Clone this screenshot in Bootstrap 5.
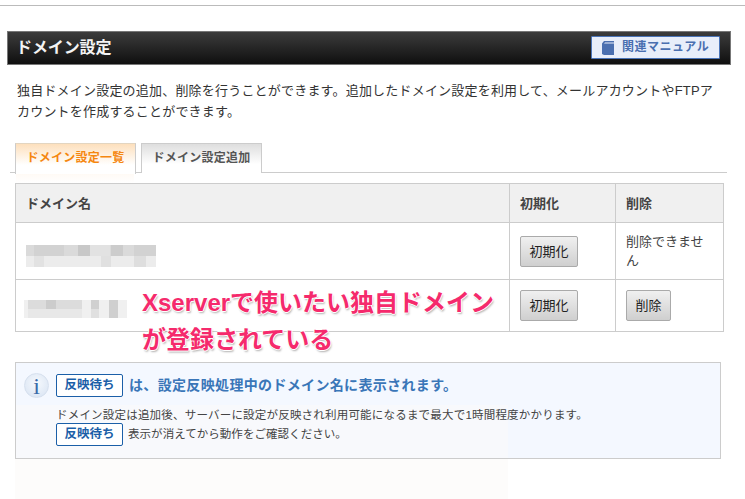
<!DOCTYPE html>
<html lang="ja"><head><meta charset="utf-8"><title>ドメイン設定</title>
<link href="https://cdn.jsdelivr.net/npm/bootstrap@5.3.0/dist/css/bootstrap.min.css" rel="stylesheet">
<style>
html,body{height:499px;overflow:hidden}
body{background:#fff;color:#333;font:13px/21px "Liberation Sans","Noto Sans CJK JP",sans-serif;position:relative}
.top-rule{height:6px;border-bottom:1px solid #bbb}
.wrap{padding:25px 14px 0 7px}
.title-bar{height:34px;border:1px solid #777;background:linear-gradient(#3c3c3c,#0f0f0f);padding:0 10px 0 8px}
.title-bar h1{margin:0;font-size:16px;font-weight:700;color:#f4f4f4;letter-spacing:-.1px;line-height:32px}
.manual{width:129px;height:23px;background:#e8eefa;border:1px solid #4a74b8;border-radius:1px;color:#4a6fb0;font-size:12px;font-weight:700;letter-spacing:.5px;line-height:21px;text-decoration:none;margin-top:-1px;padding-left:10px}
.manual:hover{color:#4a6fb0}
.intro{margin:15px 0 0 10px;letter-spacing:.2px;color:#333;width:705px;font-size:13px}
.tabs-row{margin:21px 4px 0 3px;padding-left:5px;border-bottom:1px solid #ccc;height:30px;gap:5px;flex-wrap:nowrap}
.tabs-row .nav-link{width:121px;height:30px;padding:0;margin:0;border:1px solid #ccc;border-bottom:0;border-radius:0;font-size:12px;font-weight:700;line-height:28px;text-align:center;color:#555;background:linear-gradient(#dedede,#fff 70%);letter-spacing:.25px}
.tabs-row .nav-link.active{color:#f5870f;background:linear-gradient(#fde0bd,#fff 70%);border-color:#e3d5c0 #ccc #fff;height:31px}
.zone{margin:0 0 0 8px;width:708px}
.tab-trace{height:10px;width:118px;margin-left:1px;background:linear-gradient(#fffaf4,#fff)}
.dom-table{margin:0;border-color:#ccc;table-layout:fixed;width:708px;--bs-table-color:#444}
.dom-table th{background:#f0f0f0;font-size:13px;font-weight:700;color:#444;height:39px;padding:0 10px;vertical-align:middle;border-color:#ccc}
.dom-table td{padding:0 10px;vertical-align:middle;border-color:#ccc;font-size:13px;line-height:19px}
.row-a{height:57px}.row-b{height:52px}
.grey-btn{height:31px;padding:0;border:1px solid #aaa;border-radius:2px;background:linear-gradient(#f0f0f0,#cfcfcf);font-size:13px;color:#222;line-height:29px}
.grey-btn.w1{width:58px}.grey-btn.w2{width:45px}
.mosaic{display:block;filter:blur(.6px)}
.m1{margin-top:9px}
.m2{margin:6px 0 0 -2px}
.info-box{margin:30px 0 0;width:706px;height:97px;border:1px solid #ccc;background:linear-gradient(transparent 44%,#f8f9fc 44%) no-repeat 0 0/492px 100%,#f4f8ff;padding:9px 8px;gap:7px}
.info-mark{width:25px;height:25px;flex:none;border-radius:50%;border:1px solid #d6e0ee;background:radial-gradient(circle at 50% 40%,#f6f9fd,#d6e2f2);color:#3a6aa8;font:400 24px/24px "Liberation Serif",serif;text-align:center;margin-top:1px}
.wait-tag{display:inline-block;width:67px;height:23px;border:1px solid #1b5fa8;border-radius:2px;background:#fff;color:#1b5fa8;font-size:12.5px;font-weight:700;line-height:21px;text-align:center;letter-spacing:-.05px}
.info-head{color:#3a76b8;font-size:14px;font-weight:700;line-height:23px;margin:2px 0 0;letter-spacing:.34px}
.info-head .wait-tag{margin-right:6px;vertical-align:top}
.info-text{font-size:11.5px;line-height:21px;color:#444;margin:8px 0 0;letter-spacing:.05px}
.info-text .first-line{letter-spacing:.2px}
.info-text .second-line{margin-top:-3px;line-height:23px}
.info-text .wait-tag{margin-right:5px;vertical-align:top}
.fade-foot{width:493px;height:41px;background:#fdfcfb}
.callout{position:absolute;left:142px;top:284px;margin:0;width:360px;font-size:24px;font-weight:700;line-height:37px;color:#f52a6c;text-shadow:-1px 0 #fff,1px 0 #fff,0 -1px #fff,0 1px #fff,1px 2px 2px rgba(0,0,0,.3)}
</style></head><body>
<div class="top-rule"></div>
<main class="wrap">
  <div class="title-bar d-flex justify-content-between align-items-center">
    <h1>ドメイン設定</h1>
    <a class="manual d-flex align-items-center gap-2" href="#">
      <svg width="12" height="14" viewBox="0 0 12 14"><path fill="#4a6fb0" d="M0 2.5 2 0h10v1.5H3L2 2.5h10V14H2l-2-1z"/></svg>
      <span>関連マニュアル</span>
    </a>
  </div>
  <p class="intro">独自ドメイン設定の追加、削除を行うことができます。追加したドメイン設定を利用して、メールアカウントやFTPアカウントを作成することができます。</p>
  <ul class="nav tabs-row">
    <li class="nav-item"><a class="nav-link active" href="#">ドメイン設定一覧</a></li>
    <li class="nav-item"><a class="nav-link" href="#">ドメイン設定追加</a></li>
  </ul>
  <div class="zone">
    <div class="tab-trace"></div>
    <table class="table table-bordered dom-table">
      <colgroup><col style="width:494px"><col style="width:106px"><col style="width:108px"></colgroup>
      <thead><tr><th>ドメイン名</th><th>初期化</th><th>削除</th></tr></thead>
      <tbody>
        <tr class="row-a"><td>
          <svg class="mosaic m1" width="130" height="22" viewBox="0 0 130 22" aria-hidden="true"><rect width="130" height="11" fill="#dadada"/><rect y="11" width="130" height="11" fill="#ececec"/><rect x="8" width="30" height="11" fill="#d2d2d2"/><rect x="52" width="12" height="11" fill="#c8c8c8"/><rect x="85" width="12" height="11" fill="#cccccc"/><rect x="108" width="22" height="11" fill="#d2d2d2"/><rect x="64" width="20" height="11" fill="#e2e2e2"/><rect x="8" y="11" width="10" height="11" fill="#e2e2e2"/><rect x="75" y="11" width="10" height="11" fill="#e0e0e0"/><rect x="108" y="11" width="12" height="11" fill="#dedede"/></svg>
        </td><td><button class="btn grey-btn w1 d-block">初期化</button></td><td>削除できません</td></tr>
        <tr class="row-b"><td>
          <svg class="mosaic m2" width="103" height="18" viewBox="0 0 103 18" aria-hidden="true"><rect width="103" height="18" fill="#f0f0f0"/><rect x="4" width="54" height="9" fill="#dcdcdc"/><rect x="4" y="9" width="54" height="9" fill="#e8e8e8"/><rect x="22" width="10" height="9" fill="#cccccc"/><rect x="67" width="8" height="9" fill="#d0d0d0"/><rect x="67" y="9" width="8" height="9" fill="#e0e0e0"/><rect x="85" width="9" height="18" fill="#cfcfcf"/></svg>
        </td><td><button class="btn grey-btn w1 d-block">初期化</button></td><td><button class="btn grey-btn w2 d-block">削除</button></td></tr>
      </tbody>
    </table>
    <section class="info-box d-flex">
      <div class="info-mark">i</div>
      <div>
        <p class="info-head"><span class="wait-tag">反映待ち</span>は、設定反映処理中のドメイン名に表示されます。</p>
        <div class="info-text">
          <div class="first-line">ドメイン設定は追加後、サーバーに設定が反映され利用可能になるまで最大で1時間程度かかります。</div>
          <div class="second-line"><span class="wait-tag">反映待ち</span>表示が消えてから動作をご確認ください。</div>
        </div>
      </div>
    </section>
    <div class="fade-foot"></div>
  </div>
</main>
<p class="callout">Xserverで使いたい独自ドメイン<br>が登録されている</p>
</body></html>
